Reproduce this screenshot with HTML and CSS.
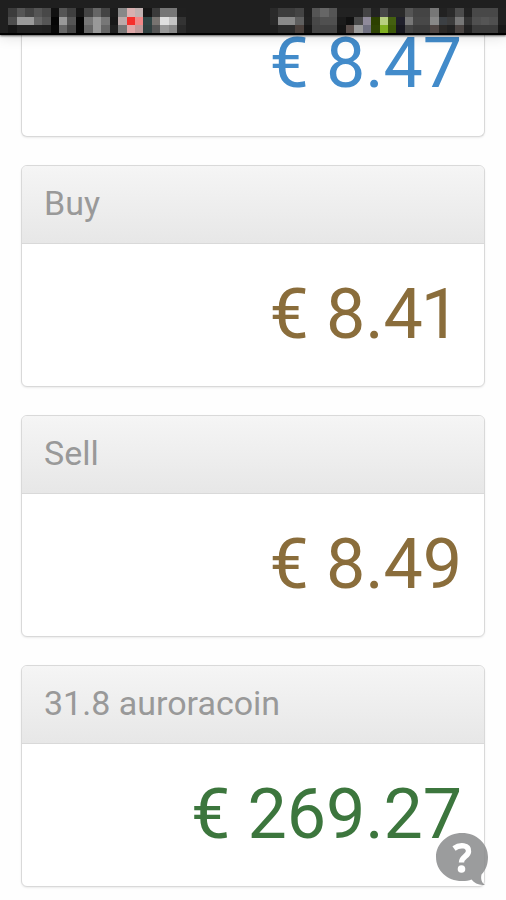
FILE: index.html
```html
<!DOCTYPE html>
<html lang="en">
<head>
<meta charset="utf-8">
<title>Auroracoin</title>
<link rel="stylesheet" href="styles.css">
</head>
<body>
<header class="status"><div class="mosaic" id="mosaic"></div></header>
<main class="panels">
  <section class="panel panel-cut"><div class="price blue">€ 8.47</div></section>
  <section class="panel"><h2>Buy</h2><div class="price gold narrow">€ 8.4<span>1</span></div></section>
  <section class="panel"><h2>Sell</h2><div class="price gold">€ 8.49</div></section>
  <section class="panel"><h2>31.8 auroracoin</h2><div class="price green">€ 269.27</div></section>
</main>
<svg class="help" viewBox="0 0 54 56" aria-label="Help">
  <path d="M27 2C12.600 2 1 12.500 1 26s11 24 26 24c4 0 7-.5 9.500-1.500 3 4 8 6.200 13.500 5.300-3.500-2-4.500-6-3.500-10.300C51 39 53 33 53 26 53 12.500 41.500 2 27 2Z" fill="#8b8c8d" fill-opacity=".86"/>
  <path d="M19 17.500C25 13.200 34 14 33.500 20.500c-.3 5-7 5-7 11" fill="none" stroke="#fff" stroke-width="5.400"/>
  <circle cx="26.500" cy="38" r="3.800" fill="#fff"/>
</svg>
<script src="status.js"></script>
</body>
</html>
```
FILE: styles.css
```css
* { box-sizing: border-box; }
body { margin: 0; height: 900px; overflow: hidden; background: #fefefe; font-family: Roboto, sans-serif; }
.status { position: relative; z-index: 1; height: 35px; padding-top: 3px; background: #1f1f1f; border-bottom: 2px solid #000; box-shadow: 0 1px 2px rgba(0,0,0,.6), 0 2px 14px rgba(0,0,0,.13); }
.mosaic { display: grid; grid-template-columns: repeat(60, 1fr); grid-template-rows: 5px 9px 8px 8px; }
.panels { display: flex; flex-direction: column; gap: 28px; padding: 0 21px; }
.panel { height: 222px; border: 1px solid #d9d9d9; border-radius: 6px; background: #fff; box-shadow: 0 1px 2px rgba(0,0,0,.08); }
.panel-cut { height: 102px; border-top: 0; border-radius: 0 0 6px 6px; display: flex; flex-direction: column; }
h2 { margin: 0; height: 78px; padding: 0 22px; border-bottom: 1px solid #d9d9d9; border-radius: 5px 5px 0 0; background: linear-gradient(#f5f5f5, #e7e7e7); color: #999; font-size: 34px; font-weight: 400; line-height: 74px; }
.price { height: 142px; padding: 0 22px; font-size: 70px; line-height: 141px; letter-spacing: -.1px; text-align: right; white-space: pre; }
.panel-cut .price { height: 102px; line-height: 56px; }
.narrow span { display: inline-block; transform: translateX(-2px); }
.blue { color: #428bca; }
.gold { color: #8a6d3b; }
.green { color: #3c763d; }
.help { position: absolute; left: 435px; top: 831px; width: 54px; height: 56px; }
```
FILE: status.js
```js
// Each entry: column, then colours of the upper, middle and lower cells.
const cells = `1 3c3c3c 4e4e4e 161616|2 555555 9a9a9a 222222|3 444444 9a9a9a 222222|4 555555 666666 222222|5 484848 555555 202020|6 111111 050505 080808|7 555555 999999 666666|8 3f3f3f 555555 444444|9 161616 050505 050505|10 444444 777777 666666|11 666666 999999 999999|12 444444 777777 666666|13 1c1c1c 181818 202020|14 888888 bbaaaa 777777|15 d8b0b0 f5302c e0a8a8|16 c0b0b0 f08888 c09a9a|17 161616 2f4444 2f3f3f|18 3a3a3a 777370 555555|19 777777 e0e0e0 999999|20 777777 c4c4c4 888888|21 202020 333333 2a2a2a|32 2a2a2a 292929 202020|33 3c3c3c 8a8a8a 2c2c2c|34 3c3c3c 8a8a8a 2c2c2c|35 444444 5f5f5f 4a403c|36 202020 222222 171717|37 555555 484848 444444|38 666666 505050 444444|39 555555 505050 444444|40 222222 1b1b1b 161616|41 222222 111111 5a4f4c|42 222222 4a4a4a 9a9a9a|43 444444 8f8a9a 707080|44 222222 2c4000 2f4404|45 484848 b8d080 80b020|46 2a2a2a 446010 3c5808|47 2a2a2a 20202c 181820|48 555555 777777 444444|49 444444 484848 3c3c3c|50 444444 484848 3c3c3c|51 777777 888888 4f4644|52 222222 3c4044 2a2826|53 2a2a2a 3c3c3c 222222|54 4c4c4c 777777 4a4442|55 222222 333333 222222|56 484848 505050 3c3c3c|57 484848 555555 3c3c3c|58 484848 505050 3c3c3c|59 202020 202020 181818`;
const mosaic = document.getElementById('mosaic');
for (const entry of cells.split('|')) {
  const [col, ...colors] = entry.split(' ');
  colors.forEach((color, row) => {
    const cell = document.createElement('i');
    cell.style.gridArea = `${row + 2} / ${+col + 1}`;
    cell.style.background = '#' + color;
    mosaic.append(cell);
  });
}
```
